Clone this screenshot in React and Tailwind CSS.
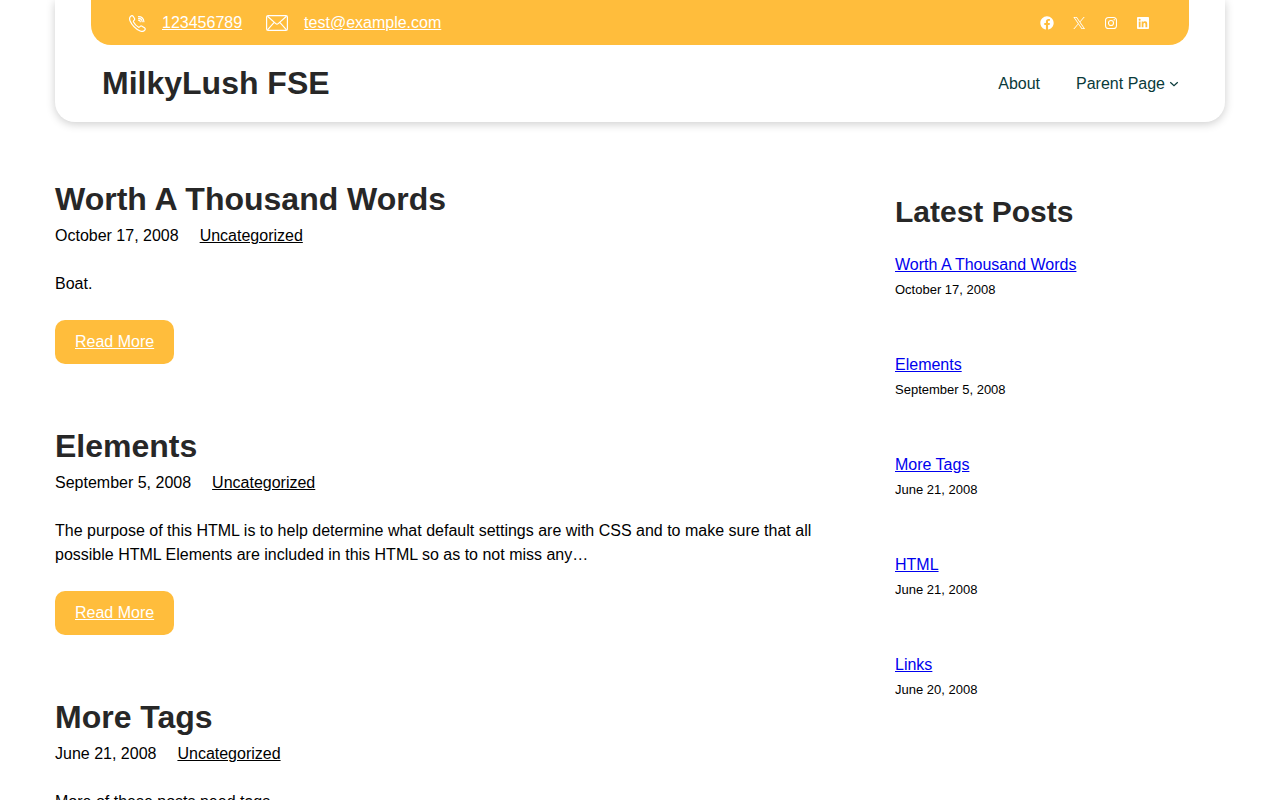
import React from "react";

const posts = [
  {
    title: "Worth A Thousand Words",
    date: "October 17, 2008",
    excerpt: "Boat.",
  },
  {
    title: "Elements",
    date: "September 5, 2008",
    excerpt:
      "The purpose of this HTML is to help determine what default settings are with CSS and to make sure that all possible HTML Elements are included in this HTML so as to not miss any…",
  },
  {
    title: "More Tags",
    date: "June 21, 2008",
    excerpt: "More of these posts need tags.",
  },
];

const latestPosts = [
  { title: "Worth A Thousand Words", date: "October 17, 2008" },
  { title: "Elements", date: "September 5, 2008" },
  { title: "More Tags", date: "June 21, 2008" },
  { title: "HTML", date: "June 21, 2008" },
  { title: "Links", date: "June 20, 2008" },
];

function PhoneIcon() {
  return (
    <svg className="w-[17px] h-[17px] shrink-0" viewBox="0 0 17 17" fill="none" stroke="currentColor" strokeWidth="1.2" strokeLinecap="round" strokeLinejoin="round" aria-hidden="true">
      <path d="M1.6 1.4c.9-.9 1.9-1 2.6 0l1.2 1.9c.4.7.3 1.3-.2 1.9l-.7.8c-.2.3-.2.6 0 1C5.600 9 7.300 10.900 9.300 12.100c.4.3.8.2 1.100 0l.8-.7c.5-.5 1.200-.6 1.800-.2l2.500 1.600c.8.6 1 1.500.3 2.300-1.100 1.300-2.700 1.800-4.600.9C6.700 13.900 2.900 10.100 1 5.700.300 4 .500 2.500 1.600 1.400z" />
      <path d="M9.5 1.6c3 0 5.2 2.100 5.400 5.100M9.500 3.400c2.100.1 3.500 1.400 3.700 3.300M9.500 5.200c1 .1 1.700.7 1.800 1.500" />
    </svg>
  );
}

function MailIcon() {
  return (
    <svg className="w-[22px] h-4 shrink-0" viewBox="0 0 22 16" fill="none" stroke="currentColor" strokeWidth="1.2" strokeLinejoin="round" aria-hidden="true">
      <rect x="0.6" y="0.6" width="20.8" height="14.8" rx="1.5" />
      <path d="M1.5 1.2 9.8 8.6c.8.7 1.600.7 2.400 0l8.300-7.400M1.500 14.800l6.700-7.400M20.500 14.800l-6.700-7.400" />
    </svg>
  );
}

const socials = [
  {
    label: "Facebook",
    icon: (
      <path d="M12 2C6.5 2 2 6.5 2 12c0 5 3.7 9.1 8.4 9.9v-7H7.9V12h2.5V9.8c0-2.5 1.5-3.9 3.8-3.9 1.1 0 2.2.2 2.2.2v2.5h-1.3c-1.2 0-1.6.8-1.6 1.6V12h2.8l-.4 2.9h-2.3v7C18.3 21.1 22 17 22 12c0-5.5-4.5-10-10-10z" />
    ),
  },
  {
    label: "X",
    icon: (
      <path d="M13.982 10.622 20.54 3h-1.554l-5.693 6.618L8.745 3H3.5l6.876 10.007L3.5 21h1.554l6.012-6.989L15.868 21h5.245l-7.131-10.378Zm-2.128 2.474-.697-.997-5.543-7.93H8l4.474 6.4.697.996 5.815 8.318h-2.387l-4.745-6.787Z" />
    ),
  },
  {
    label: "Instagram",
    icon: (
      <g>
        <rect x="3.8" y="3.8" width="16.4" height="16.4" rx="4.6" fill="none" stroke="currentColor" strokeWidth="1.62" />
        <circle cx="12" cy="12" r="3.8" fill="none" stroke="currentColor" strokeWidth="1.62" />
        <circle cx="16.8" cy="7.2" r="1.08" />
      </g>
    ),
  },
  {
    label: "LinkedIn",
    icon: (
      <path d="M19.7,3H4.3C3.582,3,3,3.582,3,4.3v15.4C3,20.418,3.582,21,4.3,21h15.4c0.718,0,1.3-0.582,1.3-1.3V4.3 C21,3.582,20.418,3,19.7,3z M8.339,18.338H5.667v-8.59h2.672V18.338z M7.004,8.574c-0.857,0-1.549-0.694-1.549-1.548 c0-0.855,0.691-1.548,1.549-1.548c0.854,0,1.547,0.694,1.547,1.548C8.551,7.881,7.858,8.574,7.004,8.574z M18.339,18.338h-2.669 v-4.177c0-0.996-0.017-2.278-1.387-2.278c-1.389,0-1.601,1.086-1.601,2.206v4.249h-2.667v-8.59h2.559v1.174h0.037 c0.356-0.675,1.227-1.387,2.526-1.387c2.703,0,3.203,1.779,3.203,4.092V18.338z" />
    ),
  },
];

function Header() {
  return (
    <header className="rounded-b-[20px] bg-white px-4 pb-[21px] shadow-[0_2px_10px_rgba(0,0,0,0.2)] sm:px-9">
      {/* Contact bar */}
      <div className="flex flex-wrap items-center justify-between gap-x-6 rounded-b-[20px] bg-[#ffbd3c] px-[38px] pt-[11px] pb-[10px] text-white">
        <div className="flex flex-wrap items-center gap-x-6">
          <div className="flex items-center gap-4">
            <PhoneIcon />
            <a href="tel:123456789" className="underline">123456789</a>
          </div>
          <div className="flex items-center gap-4">
            <MailIcon />
            <a href="mailto:test@example.com" className="underline">test@example.com</a>
          </div>
        </div>
        <ul className="flex items-center gap-4">
          {socials.map((social) => (
            <li key={social.label}>
              <a href="#" aria-label={social.label} className="block">
                <svg className="w-4 h-4" viewBox="0 0 24 24" fill="currentColor" aria-hidden="true">
                  {social.icon}
                </svg>
              </a>
            </li>
          ))}
        </ul>
      </div>

      {/* Site title and menu */}
      <div className="flex flex-wrap items-center justify-between gap-x-9 pt-5 pr-[10px] pl-[11px]">
        <p className="text-[32px] leading-9 font-bold text-[#272727]">
          <a href="#">MilkyLush FSE</a>
        </p>
        <nav className="flex items-center gap-9 pt-0.5 text-[#0a3a3a]">
          <a href="#">About</a>
          <div className="flex items-center gap-1">
            <a href="#">Parent Page</a>
            <button type="button" aria-label="Parent Page submenu">
              <svg className="w-[10px] h-[10px]" viewBox="0 0 12 12" fill="none" stroke="currentColor" strokeWidth="1.5" aria-hidden="true">
                <path d="M1.5 4 6 8l4.500-4" />
              </svg>
            </button>
          </div>
        </nav>
      </div>
    </header>
  );
}

export default function App() {
  return (
    <div className="mx-auto max-w-[1170px] font-['Liberation_Sans',Arial,sans-serif] text-base text-black">
      <Header />

      <div className="grid gap-[60px] px-4 pt-[58px] pb-16 md:grid-cols-[1fr_330px] xl:px-0">
        <main className="flex flex-col gap-[63px]">
          {posts.map((post) => (
            <article key={post.title}>
              <h2 className="text-[32px] leading-[38px] font-bold text-[#272727]">
                <a href="#">{post.title}</a>
              </h2>
              <div className="mt-[6px] flex flex-wrap gap-x-[21px]">
                <time>{post.date}</time>
                <a href="#" className="underline">Uncategorized</a>
              </div>
              <p className="mt-6">{post.excerpt}</p>
              <a href="#" className="mt-6 inline-block rounded-[10px] bg-[#ffbd3c] px-5 py-[10px] align-top text-white underline">
                Read More
              </a>
            </article>
          ))}
        </main>

        <aside className="pt-[14px]">
          <h2 className="text-[30px] leading-9 font-bold text-[#272727]">Latest Posts</h2>
          <ul className="mt-[23px] flex flex-col gap-[50px]">
            {latestPosts.map((post) => (
              <li key={post.title}>
                <a href="#" className="text-[#0000ee] underline">{post.title}</a>
                <time className="block text-[13px] leading-[26px]">{post.date}</time>
              </li>
            ))}
          </ul>
        </aside>
      </div>
    </div>
  );
}
